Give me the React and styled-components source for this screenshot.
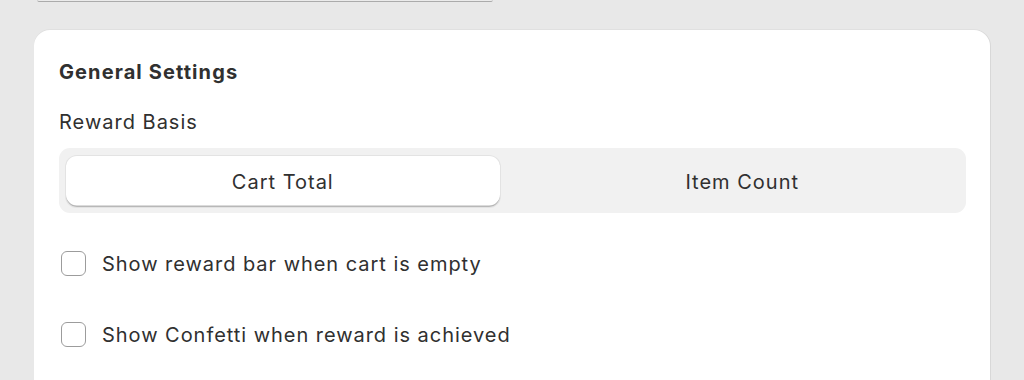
import styled, { createGlobalStyle } from "styled-components";
import { useState } from "react";

const GlobalStyle = createGlobalStyle`
  html, body {
    margin: 0;
    padding: 0;
    background: #e8e8e8;
  }

  body {
    font-family: "Inter", "Liberation Sans", sans-serif;
    color: #303030;
    -webkit-font-smoothing: antialiased;
  }
`;

const App = () => {
  const [basis, setBasis] = useState("cart");
  const [showEmpty, setShowEmpty] = useState(false);
  const [showConfetti, setShowConfetti] = useState(false);

  return (
    <>
      <GlobalStyle />
      <Page>
        <TopField />

        <Card>
          <CardTitle>General Settings</CardTitle>

          <FieldLabel>Reward Basis</FieldLabel>

          <Segmented>
            <SegmentButton
              $active={basis === "cart"}
              onClick={() => setBasis("cart")}
            >
              Cart Total
            </SegmentButton>
            <SegmentButton
              $active={basis === "items"}
              onClick={() => setBasis("items")}
            >
              Item Count
            </SegmentButton>
          </Segmented>

          <CheckList>
            <CheckRow>
              <CheckInput
                type="checkbox"
                checked={showEmpty}
                onChange={(e) => setShowEmpty(e.target.checked)}
              />
              <span>Show reward bar when cart is empty</span>
            </CheckRow>
            <CheckRow>
              <CheckInput
                type="checkbox"
                checked={showConfetti}
                onChange={(e) => setShowConfetti(e.target.checked)}
              />
              <span>Show Confetti when reward is achieved</span>
            </CheckRow>
          </CheckList>
        </Card>
      </Page>
    </>
  );
};

const Page = styled.div`
  width: 1024px;
  height: 380px;
  overflow: hidden;
  padding-left: 34px;
  box-sizing: border-box;
`;

const TopField = styled.div`
  width: 456px;
  height: 2px;
  margin-left: 3px;
  margin-bottom: 28px;
  box-sizing: border-box;
  background: #ebebeb;
  border: 1px solid #cfcfcf;
  border-top: none;
  border-bottom: 1px solid #ababab;
  border-radius: 0 0 8px 8px;
`;

const Card = styled.div`
  width: 956px;
  min-height: 380px;
  box-sizing: border-box;
  padding: 30px 24px 0 25px;
  background: #fff;
  border-radius: 16px 16px 0 0;
  box-shadow: 1px 0 0 #d8d8d8, 0 -1px 0 #e0e0e0;
`;

const CardTitle = styled.h2`
  margin: 0;
  font-size: 20px;
  line-height: 24px;
  font-weight: 650;
  letter-spacing: 0.055em;
  color: #303030;
`;

const FieldLabel = styled.div`
  margin-top: 26px;
  font-size: 20px;
  line-height: 24px;
  font-weight: 400;
  letter-spacing: 0.05em;
  color: #303030;
`;

const Segmented = styled.div`
  margin-top: 14px;
  display: grid;
  grid-template-columns: 1fr 1fr;
  column-gap: 26px;
  padding: 8px 7px 6px;
  background: #f1f1f1;
  border-radius: 11px;
`;

const SegmentButton = styled.button`
  height: 51px;
  border: none;
  border-radius: 11px;
  background: ${({ $active }) => ($active ? "#fff" : "transparent")};
  box-shadow: ${({ $active }) =>
    $active
      ? "0 0 0 1px #e3e3e3, inset 0 -1.5px 0 #b8b8b8"
      : "none"};
  font-family: inherit;
  font-size: 20px;
  font-weight: 400;
  letter-spacing: 0.05em;
  color: #303030;
  cursor: pointer;
`;

const CheckList = styled.div`
  margin-top: 38px;
  display: flex;
  flex-direction: column;
  gap: 46px;
`;

const CheckRow = styled.label`
  display: flex;
  align-items: center;
  gap: 16px;
  margin-left: 2px;
  height: 25px;
  font-size: 20px;
  letter-spacing: 0.048em;
  color: #303030;
  cursor: pointer;
`;

const CheckInput = styled.input`
  appearance: none;
  -webkit-appearance: none;
  margin: 0;
  width: 25px;
  height: 25px;
  box-sizing: border-box;
  border: 1.5px solid #9c9c9c;
  border-radius: 6px;
  background: #fff;
  cursor: pointer;

  &:checked {
    background: #303030;
    border-color: #303030;
  }
`;

export default App;
